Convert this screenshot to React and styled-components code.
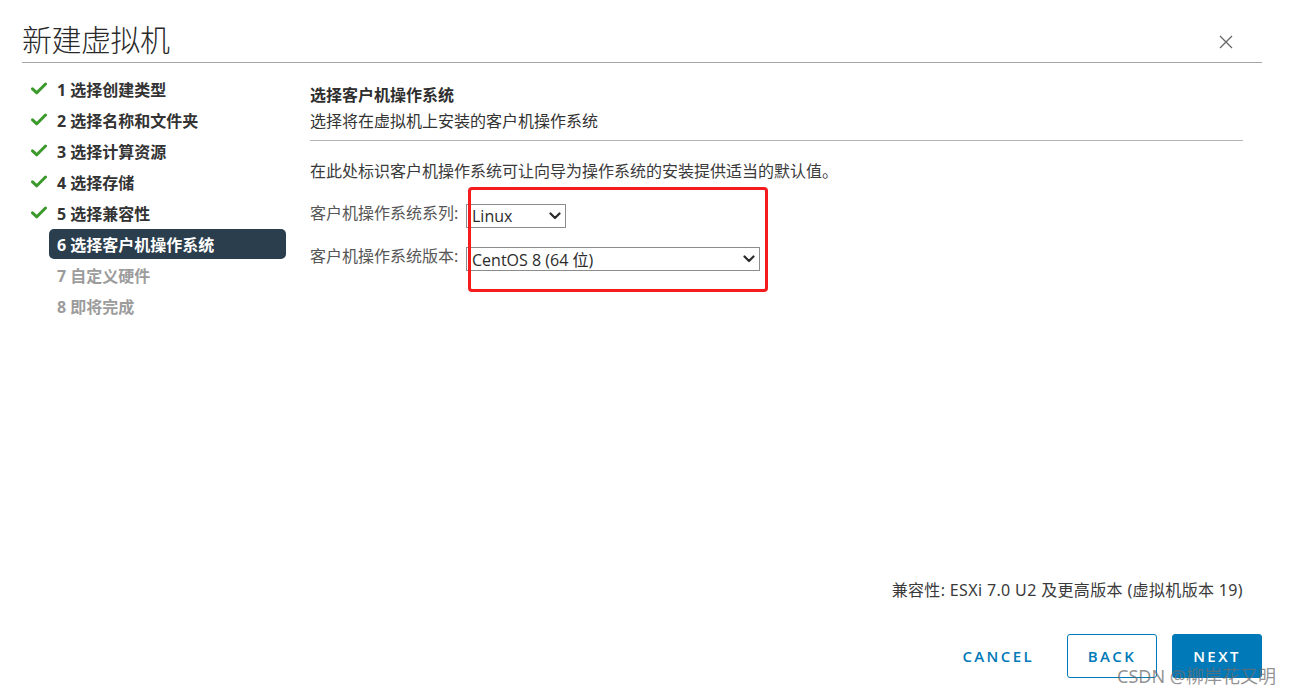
import React from 'react';
import styled, { createGlobalStyle } from 'styled-components';

const GlobalStyle = createGlobalStyle`
	html, body {
		margin: 0;
		padding: 0;
		background: #ffffff;
	}
	body {
		font-family: 'Noto Sans', 'Noto Sans CJK SC', sans-serif;
		color: #333333;
	}
	* {
		box-sizing: border-box;
	}
`;

const cjk = `'Noto Sans', 'Noto Sans CJK SC', sans-serif`;

const Dialog = styled.div`
	position: relative;
	width: 1289px;
	height: 696px;
	padding: 0 27px 0 22px;
	display: flex;
	flex-direction: column;
	overflow: hidden;
`;

const Header = styled.header`
	height: 63px;
	display: flex;
	align-items: flex-end;
	justify-content: space-between;
	border-bottom: 1px solid #a6a6a6;
	padding-bottom: 2px;
`;

const Title = styled.h1`
	margin: 0;
	font-family: ${cjk};
	font-size: 30px;
	font-weight: 300;
	line-height: 40px;
	color: #2a2a2a;
	letter-spacing: -0.5px;
`;

const CloseButton = styled.button`
	border: none;
	background: none;
	padding: 0;
	margin: 0 28px 10px 0;
	width: 16px;
	height: 16px;
	cursor: pointer;
	display: flex;
	align-items: center;
	justify-content: center;
`;

const Body = styled.div`
	flex: 1;
	display: flex;
`;

const Sidebar = styled.nav`
	width: 288px;
	padding-top: 10px;
	flex-shrink: 0;
`;

const StepRow = styled.div`
	height: 31px;
	display: flex;
	align-items: center;
`;

const StepIcon = styled.div`
	width: 27px;
	padding-left: 9px;
	display: flex;
	align-items: center;
`;

const StepLabel = styled.div`
	width: 237px;
	height: 30px;
	padding-left: 8px;
	display: flex;
	align-items: center;
	border-radius: 5px;
	font-family: ${cjk};
	font-size: 16px;
	font-weight: 700;
	white-space: nowrap;
	color: ${(p) => (p.$state === 'todo' ? '#9c9c9c' : p.$state === 'active' ? '#ffffff' : '#333333')};
	background: ${(p) => (p.$state === 'active' ? '#2b3e4d' : 'transparent')};
`;

const Content = styled.section`
	flex: 1;
	padding: 20px 19px 0 0;
	display: flex;
	flex-direction: column;
`;

const Heading = styled.h2`
	margin: 0;
	font-family: ${cjk};
	font-size: 16px;
	font-weight: 700;
	line-height: 24px;
	color: #2e2e2e;
`;

const SubHeading = styled.p`
	margin: 2px 0 0;
	font-family: ${cjk};
	font-size: 16px;
	line-height: 24px;
	color: #333333;
	padding-bottom: 7px;
	border-bottom: 1px solid #b3b3b3;
`;

const Description = styled.p`
	margin: 18px 0 0;
	font-family: ${cjk};
	font-size: 16px;
	line-height: 24px;
	color: #3a3a3a;
`;

const FieldRow = styled.div`
	display: flex;
	align-items: flex-start;
	margin-top: ${(p) => p.$gap}px;
`;

const FieldLabel = styled.label`
	width: 156px;
	font-family: ${cjk};
	font-size: 16px;
	line-height: 18px;
	color: #565656;
	white-space: nowrap;
`;

const Select = styled.div`
	width: ${(p) => p.$width}px;
	height: 24px;
	border: 1px solid #8c8c8c;
	display: flex;
	align-items: center;
	justify-content: space-between;
	padding: 0 4px 0 5px;
	font-family: 'Open Sans', 'Noto Sans CJK SC', sans-serif;
	font-size: 16px;
	color: #2b2b2b;
	background: #ffffff;
`;

const Footer = styled.footer`
	padding: 0 19px 18px 0;
	display: flex;
	flex-direction: column;
	align-items: flex-end;
`;

const Compat = styled.div`
	font-family: ${cjk};
	font-size: 16px;
	line-height: 24px;
	letter-spacing: 0.35px;
	color: #3a3a3a;
`;

const Buttons = styled.div`
	margin-top: 32px;
	margin-right: -19px;
	display: flex;
	align-items: center;
	gap: 15px;
`;

const Button = styled.button`
	width: ${(p) => (p.$variant === 'link' ? 'auto' : '90px')};
	height: 44px;
	padding: ${(p) => (p.$variant === 'link' ? '0 17px' : '0')};
	border-radius: 3px;
	border: 1px solid ${(p) => (p.$variant === 'link' ? 'transparent' : '#0079b8')};
	background: ${(p) => (p.$variant === 'primary' ? '#0079b8' : '#ffffff')};
	color: ${(p) => (p.$variant === 'primary' ? '#ffffff' : '#0079b8')};
	font-family: 'Open Sans', sans-serif;
	font-size: 15px;
	font-weight: 600;
	letter-spacing: 2.4px;
	cursor: pointer;
`;

const Highlight = styled.div`
	position: absolute;
	left: 468px;
	top: 187px;
	width: 300px;
	height: 105px;
	border: 3px solid #f41c1c;
	border-radius: 4px;
	pointer-events: none;
`;

const Watermark = styled.div`
	position: absolute;
	left: 1117px;
	top: 663px;
	font-family: 'Noto Sans', 'Noto Sans CJK SC', sans-serif;
	font-size: 18px;
	line-height: 26px;
	color: rgba(110, 110, 110, 0.75);
	white-space: nowrap;
	pointer-events: none;
`;

const CheckIcon = () => (
	<svg width="16" height="13" viewBox="0 0 16 13">
		<path d="M1.5 6.8 L5.8 10.8 L14.5 2" fill="none" stroke="#3b9a2b" strokeWidth="3" strokeLinecap="round" strokeLinejoin="round" />
	</svg>
);

const Chevron = () => (
	<svg width="12" height="8" viewBox="0 0 12 8">
		<path d="M1.5 1.5 L6 6 L10.5 1.5" fill="none" stroke="#2b2b2b" strokeWidth="2.2" strokeLinecap="round" strokeLinejoin="round" />
	</svg>
);

const CloseIcon = () => (
	<svg width="14" height="14" viewBox="0 0 14 14">
		<path d="M1 1 L13 13 M13 1 L1 13" stroke="#666666" strokeWidth="1.3" />
	</svg>
);

const steps = [
	{ n: 1, label: '选择创建类型', state: 'done' },
	{ n: 2, label: '选择名称和文件夹', state: 'done' },
	{ n: 3, label: '选择计算资源', state: 'done' },
	{ n: 4, label: '选择存储', state: 'done' },
	{ n: 5, label: '选择兼容性', state: 'done' },
	{ n: 6, label: '选择客户机操作系统', state: 'active' },
	{ n: 7, label: '自定义硬件', state: 'todo' },
	{ n: 8, label: '即将完成', state: 'todo' },
];

const App = () => {
	return (
		<>
			<GlobalStyle />
			<Dialog>
				<Header>
					<Title>新建虚拟机</Title>
					<CloseButton aria-label="close">
						<CloseIcon />
					</CloseButton>
				</Header>
				<Body>
					<Sidebar>
						{steps.map((s) => (
							<StepRow key={s.n}>
								<StepIcon>{s.state === 'done' && <CheckIcon />}</StepIcon>
								<StepLabel $state={s.state}>
									{s.n} {s.label}
								</StepLabel>
							</StepRow>
						))}
					</Sidebar>
					<Content>
						<Heading>选择客户机操作系统</Heading>
						<SubHeading>选择将在虚拟机上安装的客户机操作系统</SubHeading>
						<Description>在此处标识客户机操作系统可让向导为操作系统的安装提供适当的默认值。</Description>
						<FieldRow $gap={21}>
							<FieldLabel>客户机操作系统系列:</FieldLabel>
							<Select $width={100}>
								<span>Linux</span>
								<Chevron />
							</Select>
						</FieldRow>
						<FieldRow $gap={19}>
							<FieldLabel>客户机操作系统版本:</FieldLabel>
							<Select $width={294}>
								<span>CentOS 8 (64 位)</span>
								<Chevron />
							</Select>
						</FieldRow>
					</Content>
				</Body>
				<Footer>
					<Compat>兼容性: ESXi 7.0 U2 及更高版本 (虚拟机版本 19)</Compat>
					<Buttons>
						<Button $variant="link">CANCEL</Button>
						<Button $variant="outline">BACK</Button>
						<Button $variant="primary">NEXT</Button>
					</Buttons>
				</Footer>
				<Highlight />
				<Watermark>CSDN @柳岸花又明</Watermark>
			</Dialog>
		</>
	);
};

export default App;
